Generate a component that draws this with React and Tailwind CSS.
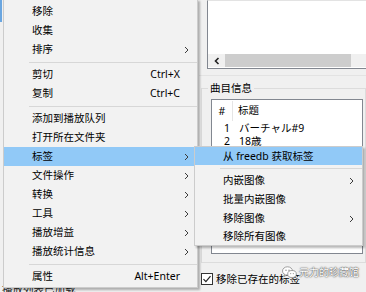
import React from 'react'

const ui = "font-['Noto_Sans','Noto_Sans_CJK_SC',sans-serif] text-[10.5px] text-black"

function Chevron() {
  return (
    <svg width="5" height="8" viewBox="0 0 5 8" fill="none" aria-hidden="true">
      <path d="M1 1l3 3-3 3" stroke="#3c3c3c" strokeWidth="1" />
    </svg>
  )
}

function Item({ label, shortcut, sub, active, h = 'h-[19px]' }) {
  return (
    <div className={`flex ${h} items-center pl-[28px] pr-[8px] ${active ? 'bg-[#91c9f7]' : ''}`}>
      <span className="flex-1 leading-none">{label}</span>
      {shortcut && <span className="pr-[9px] leading-none">{shortcut}</span>}
      {sub && <Chevron />}
    </div>
  )
}

function Sep() {
  return (
    <div className="flex h-[6px] items-center pl-[25px]">
      <div className="h-px flex-1 bg-[#d7d7d7]" />
    </div>
  )
}

function CheckBox() {
  return (
    <div className="flex h-[12px] w-[12px] items-center justify-center border border-[#333333] bg-white">
      <svg width="10" height="10" viewBox="0 0 10 10" fill="none" aria-hidden="true">
        <path d="M1.5 5.2l2.4 2.4 4.6-5.4" stroke="#222" strokeWidth="1.2" />
      </svg>
    </div>
  )
}

function WeChatMark() {
  // two overlapping chat bubbles, faded white like the watermark
  return (
    <svg width="15" height="13" viewBox="0 0 15 13" aria-hidden="true">
      <ellipse cx="5.5" cy="5" rx="5" ry="4.2" fill="#ffffff" stroke="#8a8a8a" strokeWidth="0.8" />
      <path d="M2.6 8.4l-0.6 2.2 2.4-1.3" fill="#ffffff" stroke="#8a8a8a" strokeWidth="0.8" />
      <ellipse cx="10" cy="8" rx="4.3" ry="3.5" fill="#ffffff" stroke="#8a8a8a" strokeWidth="0.8" />
      <circle cx="4" cy="4.2" r="0.7" fill="#8a8a8a" />
      <circle cx="7" cy="4.2" r="0.7" fill="#8a8a8a" />
      <circle cx="8.7" cy="7.6" r="0.55" fill="#8a8a8a" />
      <circle cx="11.3" cy="7.6" r="0.55" fill="#8a8a8a" />
    </svg>
  )
}

export default function App() {
  return (
    <div className={`relative flex h-[292px] w-[366px] overflow-hidden bg-[#f0f0f0] ${ui}`}>
      {/* left side of the window, mostly under the popup */}
      <div className="flex w-[199px] flex-col">
        <div className="h-[22px] w-[2px] bg-[#6aa6e0]" />
        <div className="mt-auto h-[10px] overflow-hidden pl-[2px] leading-[14px] text-[#202020]">
          播放列表已加载
        </div>
      </div>

      {/* right side: file list, track info, option */}
      <div className="flex flex-1 flex-col">
        <div className="ml-[8px] flex h-[69px] flex-col border-b border-l border-t border-b-[#828790] border-l-[#828790] border-t-[#e3e3e3] bg-white">
          <div className="flex-1" />
          <div className="mb-[1px] flex h-[13px]">
            <div className="flex w-[17px] items-center justify-center bg-[#f0f0f0]">
              <svg width="6" height="8" viewBox="0 0 6 8" fill="none" aria-hidden="true">
                <path d="M4.5 1L1.5 4l3 3" stroke="#222" strokeWidth="1.6" />
              </svg>
            </div>
            <div className="w-[126px] bg-[#cdcdcd]" />
            <div className="flex-1 bg-[#f0f0f0]" />
          </div>
        </div>

        <div className="mt-[6px] h-px bg-[#e3e3e3]" />

        <div className="ml-[2px] mt-[12px] border border-[#dcdcdc] pb-[8px]">
          <div className="-mt-[7px] ml-[6px] w-fit bg-[#f0f0f0] px-[2px] leading-[13px]">曲目信息</div>
          <div className="ml-[9px] mr-[2px] mt-[4px] h-[155px] border border-[#828790] bg-white">
            <div className="flex h-[22px] items-center">
              <div className="w-[21px] border-r border-[#e5e5e5] text-center leading-[20px]">#</div>
              <div className="pl-[5px]">标题</div>
            </div>
            <div className="flex h-[13px] items-center">
              <div className="w-[21px] pr-[3px] text-right">1</div>
              <div className="pl-[6px]">バーチャル#9</div>
            </div>
            <div className="flex h-[13px] items-center">
              <div className="w-[21px] pr-[3px] text-right">2</div>
              <div className="pl-[6px]">18歳</div>
            </div>
          </div>
        </div>

        <div className="ml-[2px] mt-[10px] flex items-center gap-[3px]">
          <CheckBox />
          <span className="leading-[12px]">移除已存在的标签</span>
        </div>
      </div>

      {/* context menu */}
      <div className="absolute left-[3px] top-[-1px] w-[195px] border border-[#cccccc] bg-[#f2f2f2] pb-[1px] pt-[2px] shadow-[2px_2px_2px_rgba(0,0,0,0.28)]">
        <Item label="移除" />
        <Item label="收集" />
        <Item label="排序" sub />
        <Sep />
        <Item label="剪切" shortcut="Ctrl+X" />
        <Item label="复制" shortcut="Ctrl+C" />
        <Sep />
        <Item label="添加到播放队列" />
        <Item label="打开所在文件夹" />
        <Item label="标签" sub active />
        <Item label="文件操作" sub />
        <Item label="转换" sub />
        <Item label="工具" sub />
        <Item label="播放增益" sub />
        <Item label="播放统计信息" sub />
        <Sep />
        <Item label="属性" shortcut="Alt+Enter" />
      </div>

      {/* tag submenu */}
      <div className="absolute left-[194px] top-[146px] w-[169px] border border-[#cccccc] bg-[#f2f2f2] shadow-[2px_2px_2px_rgba(0,0,0,0.28)]">
        <Item label="从 freedb 获取标签" active h="h-[18px]" />
        <Sep />
        <Item label="内嵌图像" sub h="h-[19px]" />
        <Item label="批量内嵌图像" h="h-[19px]" />
        <Item label="移除图像" sub h="h-[19px]" />
        <Item label="移除所有图像" h="h-[17px]" />
      </div>

      {/* watermark */}
      <div className="absolute left-[282px] top-[265px] flex items-center gap-[2px] text-[10px] text-white [text-shadow:0_0_1px_#333,0_0_2px_#555]">
        <WeChatMark />
        <span>元力的珍藏馆</span>
      </div>
    </div>
  )
}
